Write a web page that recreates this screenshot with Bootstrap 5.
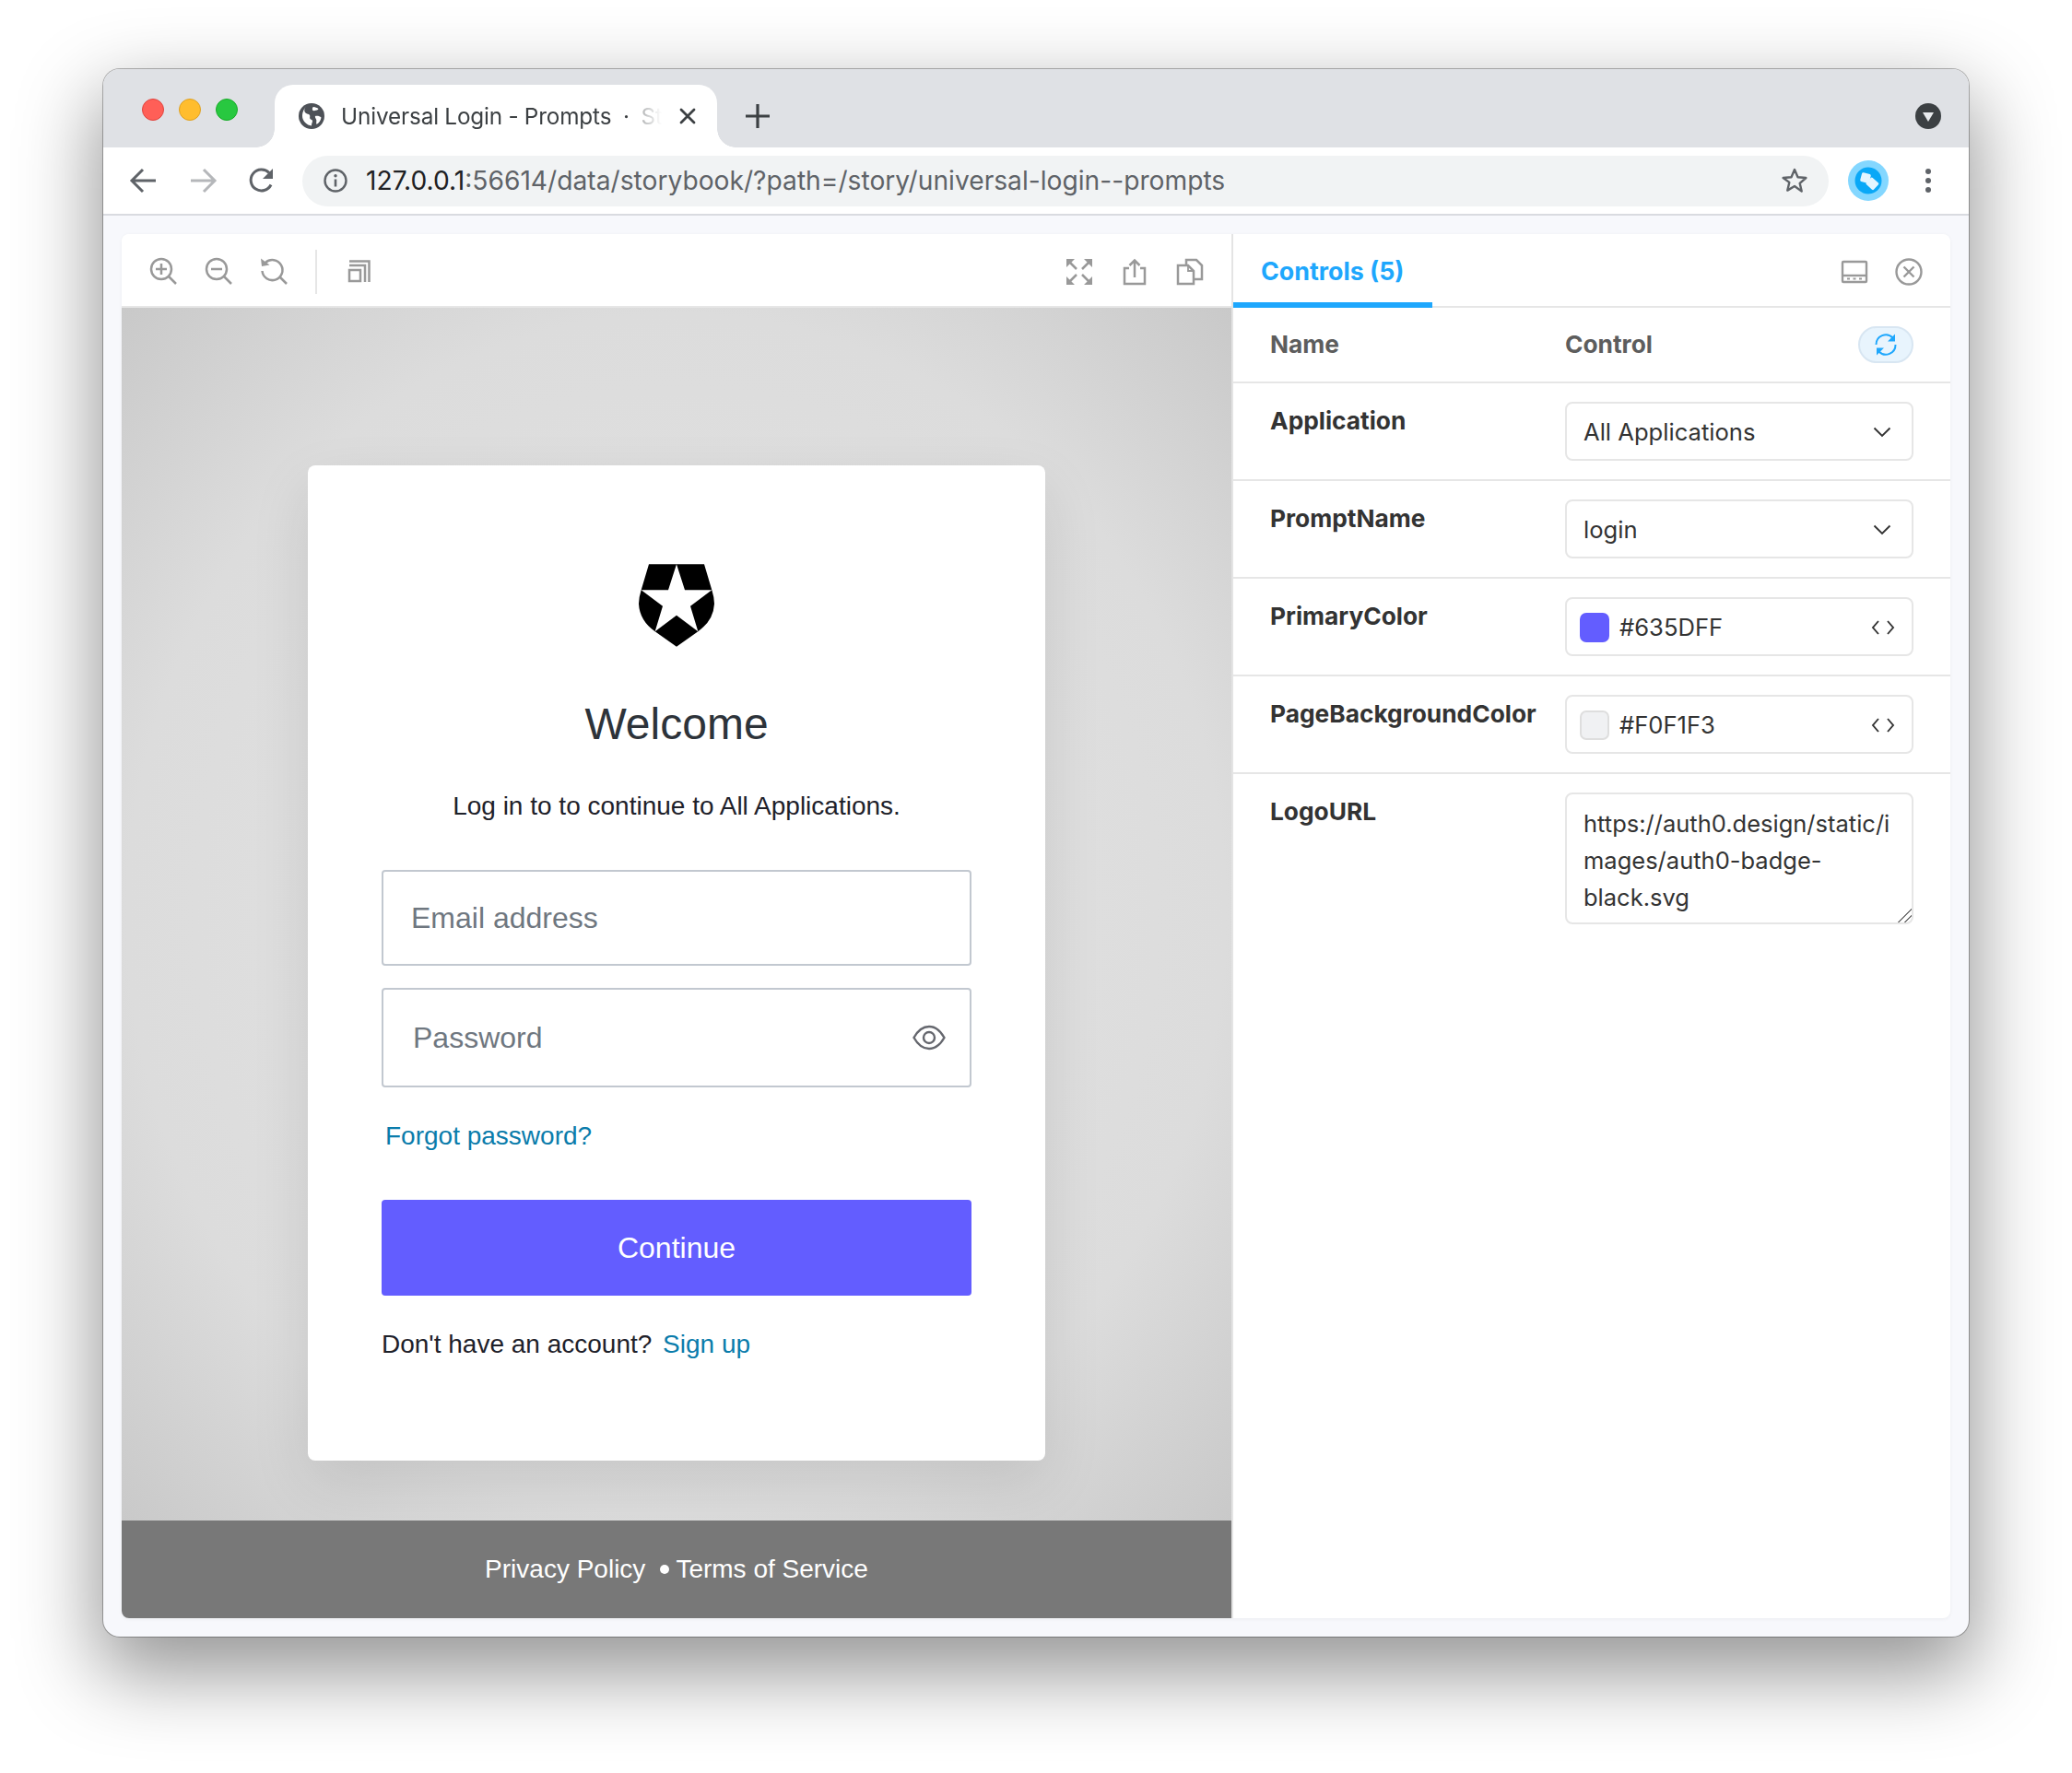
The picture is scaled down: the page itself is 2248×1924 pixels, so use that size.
<!DOCTYPE html>
<html lang="en">
<head>
<meta charset="utf-8">
<title>Universal Login - Prompts</title>
<link href="https://cdn.jsdelivr.net/npm/bootstrap@5.3.0/dist/css/bootstrap.min.css" rel="stylesheet">
<style>
html,body{height:100%;}
body{background:#fff;margin:0;padding:75px 112px 148px;font-family:Inter,"Noto Sans",sans-serif;color:#333;overflow:hidden;}
.win{height:1701px;border-radius:18px;background:#f7f8fc;box-shadow:0 0 0 1px rgba(0,0,0,.28),0 34px 86px 6px rgba(0,0,0,.42);overflow:hidden;}
.tabstrip{height:85px;background:#dfe1e5;padding-left:42px;padding-right:30px;flex:none;}
.lights{gap:16px;margin-right:40px;margin-top:3px;}
.lamp{width:24px;height:24px;border-radius:50%;}
.lamp-r{background:#ff5f57;border:1px solid #e0443e;}
.lamp-y{background:#ffbd2e;border:1px solid #dea123;}
.lamp-g{background:#28c840;border:1px solid #1aab29;}
.chrome-tab{width:480px;height:68px;margin-top:17px;background:#fff;border-radius:20px 20px 0 0;padding:0 22px 0 26px;gap:18px;position:relative;flex:none;}
.chrome-tab::before,.chrome-tab::after{content:"";position:absolute;bottom:0;width:20px;height:20px;}
.chrome-tab::before{left:-20px;background:radial-gradient(circle at 0 0,transparent 19.500px,#fff 20px);}
.chrome-tab::after{right:-20px;background:radial-gradient(circle at 100% 0,transparent 19.500px,#fff 20px);}
.tab-title{font-size:24.3px;color:#3c4043;white-space:nowrap;overflow:hidden;width:348px;flex:none;word-spacing:-.4px;-webkit-mask-image:linear-gradient(90deg,#000 91%,rgba(0,0,0,.45) 92.500%,transparent 100%);mask-image:linear-gradient(90deg,#000 91%,rgba(0,0,0,.45) 92.500%,transparent 100%);font-family:Inter,sans-serif;letter-spacing:-.13px;}
.tab-plus{margin-left:31px;margin-top:17px;}
.urlbar{height:72px;background:#fff;padding:0 41px 0 28px;flex:none;}
.navset{gap:32px;margin-right:28px;}
.omni{height:55px;background:#f1f3f4;border-radius:28px;padding:0 22px 0 23px;}
.url-text{font-size:28.2px;color:#5f6368;margin-left:20px;letter-spacing:0;white-space:nowrap;font-family:Inter,sans-serif;}
.url-text b{font-weight:400;color:#202124;}
.urlbar-end{gap:40px;margin-left:21px;}
.toolbar-rule{height:2px;background:#d9dbe0;flex:none;}
.stage{height:1542px;padding:20px;margin:0;}
.sb-shell{height:1502px;border-radius:8px;background:#fff;overflow:hidden;box-shadow:0 1px 4px rgba(0,0,0,.05);}
.preview-col{width:1206px;border-right:2px solid #e4e4e4;flex:none;}
.sb-tools{height:80px;background:#fff;border-bottom:2px solid #e6e6e6;padding:3px 29px 0 30px;flex:none;}
.tool-set{gap:28px;}
.tool-sep{width:2px;height:48px;background:#e6e6e6;}
.canvas-area{flex:1;background:radial-gradient(ellipse farthest-corner at 50% 50%,#e4e4e4 0%,#dcdcdc 70%,#c9c9c9 100%);font-family:"Liberation Sans",Arial,sans-serif;min-height:0;}
.login-card{width:800px;height:1080px;margin:171px auto 0;background:#fff;border-radius:8px;box-shadow:0 24px 64px rgba(0,0,0,.1);padding:107px 80px 0;flex:none;}
.shield{display:block;margin:0 auto;}
.welcome{font-size:48px;line-height:1;font-weight:400;text-align:center;color:#2d333a;margin:60px 0 0;font-family:"Liberation Sans",Arial,sans-serif;}
.lead-line{font-size:28px;line-height:40px;color:#1e212a;text-align:center;margin:45px 0 0;}
.auth-input.form-control{height:104px;border:2px solid #c2c8d0;border-radius:4px;font-size:32px;padding:0 30px;color:#2d333a;box-shadow:none;font-family:"Liberation Sans",Arial,sans-serif;}
.auth-input.form-control::placeholder{color:#6f7780;opacity:1;}
.email-wrap{margin-top:49px;}
.pass-wrap{margin-top:24px;}
.pass-wrap .auth-input.form-control{height:108px;padding-left:32px;}
.eye-btn{position:absolute;right:28px;top:50%;transform:translateY(-50%);line-height:0;}
.auth-link{color:#0a7cab;text-decoration:none;font-size:28px;}
.forgot{margin:33px 0 0 4px;line-height:40px;}
.go-btn.btn{width:100%;height:104px;margin-top:45px;background:#635dff;border:0;border-radius:4px;color:#fff;font-size:32px;}
.signup-row{margin:33px 0 0;font-size:28px;line-height:40px;color:#1e212a;}
.signup-row .auth-link{margin-left:4px;}
.legal-bar{height:106px;background:#787878;color:#fff;font-size:28px;gap:0;flex:none;font-family:"Liberation Sans",Arial,sans-serif;}
.legal-dot{width:10px;height:10px;background:#fff;border-radius:50%;margin:0 7px 0 16px;}
.panel-col{flex:1;min-width:0;}
.panel-tabs{height:80px;border-bottom:2px solid #e6e6e6;position:relative;padding-right:30px;flex:none;}
.ctl-tab{height:80px;padding:0 30px 0 30px;margin-bottom:-2px;color:#1ea7fd;font-weight:700;font-size:26.8px;line-height:80px;border-bottom:6px solid #1ea7fd;width:216px;white-space:nowrap;flex:none;}
.panel-ico{gap:29px;margin-top:3px;}
.ctl-row{height:106px;border-bottom:2px solid #e6e6e6;padding:0 40px;font-size:26px;flex:none;}
.ctl-row.head{height:82px;color:#5d5d5d;align-items:center;}
.ctl-row.last{height:auto;border:0;}
.ctl-name{width:320px;flex:none;font-weight:700;font-size:26.3px;color:#333;padding-top:25px;line-height:32px;white-space:nowrap;}
.head .ctl-name,.head .ctl-label{color:#5d5d5d;padding:0;font-weight:700;font-size:26.3px;}
.ctl-field{flex:1;min-width:0;margin:20px 0 0;}
.ctl-box.form-control{height:64px;border:2px solid #e6e6e6;border-radius:8px;padding:2px 18px 0;font-size:25.6px;color:#333;line-height:1;}
.ctl-box.swatched{padding-left:14px;}
.chip{width:32px;height:32px;border-radius:7px;margin-right:11px;flex:none;}
.chip-p{background:#635dff;}
.chip-g{background:#f0f1f3;border:2px solid #dedede;}
.ctl-area.form-control{height:143px;border:2px solid #e6e6e6;border-radius:8px;padding:12px 18px 6px;font-size:25.5px;line-height:40px;color:#333;box-shadow:none;font-family:Inter,sans-serif;}
.ctl-area::-webkit-resizer{background:linear-gradient(135deg,transparent 48%,#777 48%,#777 55%,transparent 55%,transparent 72%,#777 72%,#777 79%,transparent 79%);}
.reset-pill{width:60px;height:40px;border-radius:20px;background:#e8f4fd;border:2px solid #d8e6f2;line-height:0;padding:0;}
</style>
</head>
<body>
<div class="win d-flex flex-column">
  <div class="tabstrip d-flex align-items-start">
    <div class="d-flex align-items-center lights align-self-center">
      <span class="lamp lamp-r"></span><span class="lamp lamp-y"></span><span class="lamp lamp-g"></span>
    </div>
    <div class="chrome-tab d-flex align-items-center">
      <svg width="28" height="28" viewBox="0 0 28 28" class="flex-shrink-0"><circle cx="14" cy="14" r="14" fill="#4d5157"/><path d="M9 2.500C6 5 5.500 8.500 7.500 10.500c1.500 1.400 3.500.8 4.500 2.500.8 1.500-.5 2.500.5 4 .8 1.200 2.200.5 2.500 2 .2 1.500-1.200 3-1 5.500-5-.5-10-5.300-10-10.500C4 10 6 5 9 2.500z" fill="#fff"/><path d="M16 4c2 .5 4 .5 5.500 2-.5 1.500-2.500 1.500-4 2-1.200.4-2 .2-2.500-1-.3-1 0-2.500 1-3zM18 14c2.500-.5 5 0 6.500 1.500-.5 3-2 5.500-5 7.500-1-2.500.5-3.500-.5-5.500-.6-1.300-1.500-2.500-1-3.500z" fill="#fff"/></svg>
      <span class="tab-title">Universal Login - Prompts &nbsp;·&nbsp; Storybook</span>
      <svg width="20" height="20" viewBox="0 0 20 20" class="flex-shrink-0"><path d="M3 3l14 14M17 3L3 17" stroke="#3c4043" stroke-width="2.800" stroke-linecap="round"/></svg>
    </div>
    <svg class="tab-plus" width="26" height="68" viewBox="0 0 26 68"><path d="M13 21v26M0 34h26" stroke="#3c4043" stroke-width="3.200"/></svg>
    <div class="ms-auto align-self-center" style="line-height:0;margin-top:17px">
      <svg width="28" height="28" viewBox="0 0 28 28"><circle cx="14" cy="14" r="14" fill="#3c4043"/><path d="M8 10h12l-6 10z" fill="#e8eaed"/></svg>
    </div>
  </div>
  <div class="urlbar d-flex align-items-center">
    <div class="d-flex align-items-center navset">
      <svg width="32" height="32" viewBox="0 0 32 32"><path d="M29 16H4M15 4L3 16l12 12" fill="none" stroke="#5f6368" stroke-width="3"/></svg>
      <svg width="32" height="32" viewBox="0 0 32 32"><path d="M3 16h25M17 4l12 12-12 12" fill="none" stroke="#b5b7ba" stroke-width="3"/></svg>
      <svg width="32" height="32" viewBox="0 0 32 32"><path d="M26 20.500A11.500 11.500 0 1 1 24 7.500" fill="none" stroke="#5f6368" stroke-width="3"/><path d="M28 3v11H17z" fill="#5f6368"/></svg>
    </div>
    <div class="omni flex-grow-1 d-flex align-items-center">
      <svg width="26" height="26" viewBox="0 0 26 26" class="flex-shrink-0"><circle cx="13" cy="13" r="11.500" fill="none" stroke="#5f6368" stroke-width="2.400"/><path d="M13 11.500v8" stroke="#5f6368" stroke-width="2.600"/><circle cx="13" cy="7.700" r="1.700" fill="#5f6368"/></svg>
      <span class="url-text"><b>127.0.0.1</b>:56614/data/storybook/?path=/story/universal-login--prompts</span>
      <svg class="ms-auto flex-shrink-0" width="30" height="30" viewBox="0 0 30 30"><path d="M15 3l3.500 8.200 8.900.8-6.700 5.900 2 8.700L15 21l-7.700 4.600 2-8.700L2.600 12l8.900-.8z" fill="none" stroke="#5f6368" stroke-width="2.400" stroke-linejoin="round"/></svg>
    </div>
    <div class="d-flex align-items-center urlbar-end">
      <svg width="44" height="44" viewBox="0 0 44 44"><circle cx="22" cy="22" r="22" fill="#84d7ff"/><circle cx="22" cy="22" r="14.500" fill="#0aa8f7"/><rect x="14" y="14" width="10" height="10" rx="1.500" fill="#e3f5ff" transform="rotate(15 19 19)"/><rect x="21" y="20" width="11" height="10" rx="1.500" fill="#e3f5ff" transform="rotate(42 26 25)"/></svg>
      <svg width="6" height="28" viewBox="0 0 6 28"><circle cx="3" cy="4" r="3" fill="#5f6368"/><circle cx="3" cy="14" r="3" fill="#5f6368"/><circle cx="3" cy="24" r="3" fill="#5f6368"/></svg>
    </div>
  </div>
  <div class="toolbar-rule"></div>
  <div class="stage">
    <div class="sb-shell d-flex">
      <div class="preview-col d-flex flex-column">
        <div class="sb-tools d-flex align-items-center justify-content-between">
          <div class="d-flex align-items-center tool-set">
            <svg width="32" height="32" viewBox="0 0 32 32" fill="none" stroke="#999" stroke-width="2.500"><circle cx="13" cy="13" r="11"/><path d="M21 21l8 8M13 7v12M7 13h12"/></svg>
            <svg width="32" height="32" viewBox="0 0 32 32" fill="none" stroke="#999" stroke-width="2.500"><circle cx="13" cy="13" r="11"/><path d="M21 21l8 8M7 13h12"/></svg>
            <svg width="32" height="32" viewBox="0 0 32 32" fill="none" stroke="#999" stroke-width="2.500"><path d="M6 6A11 11 0 1 1 2.500 15"/><path d="M21 21l8 8"/><path d="M1 1.500l1 8.500 8.500-1.500z" fill="#999" stroke="none"/></svg>
            <span class="tool-sep"></span>
            <svg width="32" height="32" viewBox="0 0 32 32" fill="none" stroke="#999" stroke-width="2.500"><rect x="7" y="14" width="12" height="12"/><path d="M7 9H24V27M7 4.500H28.500V27"/></svg>
          </div>
          <div class="d-flex align-items-center tool-set">
            <svg width="32" height="32" viewBox="0 0 32 32" fill="none" stroke="#999" stroke-width="2.500"><path d="M4 4l9 9M28 4l-9 9M4 28l9-9M28 28l-9-9"/><path d="M2 2h9l-9 9zM30 2h-9l9 9zM2 30h9l-9-9zM30 30h-9l9-9z" fill="#999" stroke="none"/></svg>
            <svg width="32" height="32" viewBox="0 0 32 32" fill="none" stroke="#999" stroke-width="2.500"><path d="M10 12H5v17h22V12h-5M16 22V3.500M10.500 9L16 3.500 21.500 9"/></svg>
            <svg width="32" height="32" viewBox="0 0 32 32" fill="none" stroke="#999" stroke-width="2.500"><path d="M12 8V3h11l6 6v15h-9"/><path d="M3 9h11l6 6v14H3z" fill="#fff"/><path d="M14 9v6h6" stroke-width="1.800"/></svg>
          </div>
        </div>
        <div class="canvas-area d-flex flex-column">
          <div class="login-card">
            <svg class="shield" width="82" height="90" viewBox="132 66 246 269"><path d="M165 66H345L370 150Q378 175 378 195Q375 250 325 285L255 335L185 285Q135 250 132 195Q132 175 140 150Z" fill="#000"/><path d="M255 66L282 150H370L300 203L325 285L255 233L185 285L210 203L140 150H228Z" fill="#fff"/></svg>
            <h1 class="welcome">Welcome</h1>
            <p class="lead-line">Log in to to continue to All Applications.</p>
            <div class="email-wrap"><input class="form-control auth-input" type="text" placeholder="Email address"></div>
            <div class="pass-wrap position-relative">
              <input class="form-control auth-input" type="text" placeholder="Password">
              <span class="eye-btn"><svg width="36" height="28" viewBox="0 0 36 28" fill="none" stroke="#65676e" stroke-width="2.400"><path d="M1.500 14C6 6 11.500 2 18 2s12 4 16.500 12C30 22 24.500 26 18 26S6 22 1.500 14z"/><circle cx="18" cy="14" r="6"/></svg></span>
            </div>
            <div class="forgot"><a class="auth-link" href="#">Forgot password?</a></div>
            <button class="btn go-btn" type="button">Continue</button>
            <p class="signup-row">Don't have an account? <a class="auth-link" href="#">Sign up</a></p>
          </div>
        </div>
        <div class="legal-bar d-flex align-items-center justify-content-center">
          <span>Privacy Policy</span><span class="legal-dot"></span><span>Terms of Service</span>
        </div>
      </div>
      <div class="panel-col d-flex flex-column">
        <div class="panel-tabs d-flex align-items-center justify-content-between">
          <div class="ctl-tab">Controls (5)</div>
          <div class="d-flex align-items-center panel-ico">
            <svg width="30" height="30" viewBox="0 0 30 30" fill="none" stroke="#999" stroke-width="2.400"><rect x="2" y="4" width="26" height="22" rx="1"/><path d="M2 19h26"/><path d="M7 22.500h3M13.500 22.500h3M20 22.500h3" stroke-width="2"/></svg>
            <svg width="30" height="30" viewBox="0 0 30 30" fill="none" stroke="#999" stroke-width="2.400"><circle cx="15" cy="15" r="13.500"/><path d="M9.500 9.500l11 11M20.500 9.500l-11 11"/></svg>
          </div>
        </div>
        <div class="ctl-row head d-flex">
          <div class="ctl-name">Name</div>
          <div class="ctl-label flex-grow-1">Control</div>
          <button class="reset-pill btn" type="button" aria-label="Reset"><svg width="34" height="34" viewBox="0 0 34 34" fill="none" stroke="#1ea7fd" stroke-width="2"><path d="M6.500 17a10.500 10.500 0 0 1 18-7.500M27.500 17a10.500 10.500 0 0 1-18 7.500"/><path d="M27 5.500v8h-8zM7 28.500v-8h8z" fill="#1ea7fd" stroke="none"/></svg></button>
        </div>
        <div class="ctl-row d-flex">
          <div class="ctl-name">Application</div>
          <div class="ctl-field"><div class="form-control ctl-box d-flex align-items-center justify-content-between"><span>All Applications</span><svg width="20" height="12" viewBox="0 0 20 12" fill="none" stroke="#333" stroke-width="1.900" class="me-1"><path d="M1.500 1.500L10 10l8.500-8.500"/></svg></div></div>
        </div>
        <div class="ctl-row d-flex">
          <div class="ctl-name">PromptName</div>
          <div class="ctl-field"><div class="form-control ctl-box d-flex align-items-center justify-content-between"><span>login</span><svg width="20" height="12" viewBox="0 0 20 12" fill="none" stroke="#333" stroke-width="1.900" class="me-1"><path d="M1.500 1.500L10 10l8.500-8.500"/></svg></div></div>
        </div>
        <div class="ctl-row d-flex">
          <div class="ctl-name">PrimaryColor</div>
          <div class="ctl-field"><div class="form-control ctl-box swatched d-flex align-items-center"><span class="chip chip-p"></span><span>#635DFF</span><svg class="ms-auto" width="26" height="18" viewBox="0 0 26 18" fill="none" stroke="#333" stroke-width="1.900"><path d="M8 2L2 9l6 7M18 2l6 7-6 7"/></svg></div></div>
        </div>
        <div class="ctl-row d-flex">
          <div class="ctl-name">PageBackgroundColor</div>
          <div class="ctl-field"><div class="form-control ctl-box swatched d-flex align-items-center"><span class="chip chip-g"></span><span>#F0F1F3</span><svg class="ms-auto" width="26" height="18" viewBox="0 0 26 18" fill="none" stroke="#333" stroke-width="1.900"><path d="M8 2L2 9l6 7M18 2l6 7-6 7"/></svg></div></div>
        </div>
        <div class="ctl-row last d-flex">
          <div class="ctl-name">LogoURL</div>
          <div class="ctl-field"><textarea class="form-control ctl-area">https://auth0.design/static/images/auth0-badge-black.svg</textarea></div>
        </div>
      </div>
    </div>
  </div>
</div>
<script src="https://cdn.jsdelivr.net/npm/bootstrap@5.3.0/dist/js/bootstrap.bundle.min.js"></script>
</body>
</html>
